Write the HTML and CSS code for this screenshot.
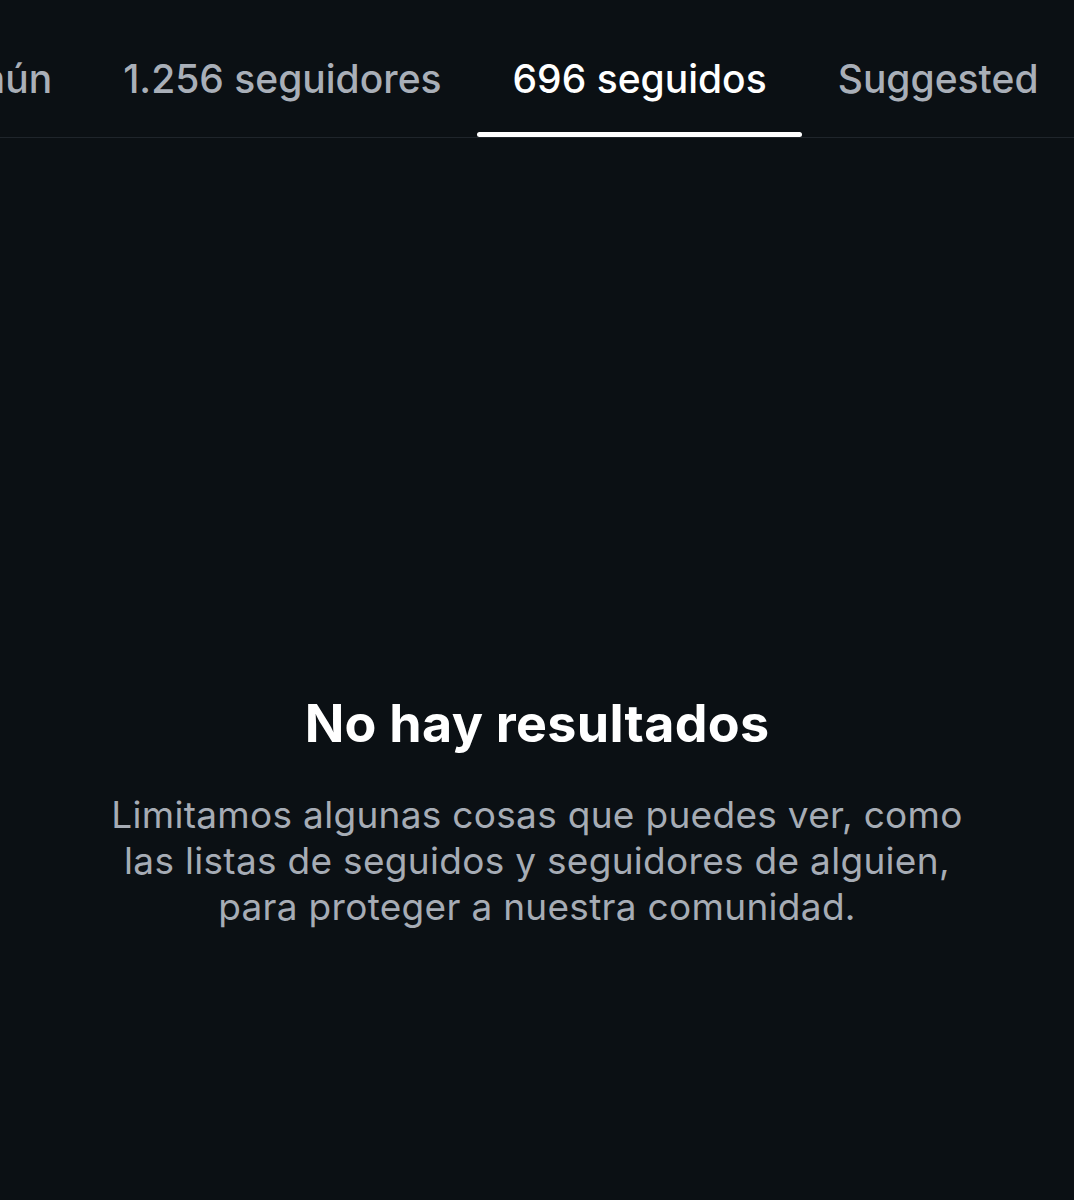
FILE: index.html
```html
<!DOCTYPE html>
<html lang="es">
  <head>
    <title>696 seguidos</title>
    <meta charset="UTF-8">
    <meta name="viewport" content="width=device-width, initial-scale=1.0">
    <link rel="stylesheet" href="styles.css">
  </head>
  <body>
    <nav class="tabs">
      <a class="tab">En común</a>
      <a class="tab">1.256 seguidores</a>
      <a class="tab active">696 seguidos</a>
      <a class="tab">Suggested</a>
    </nav>
    <main class="empty">
      <h1 class="empty-title">No hay resultados</h1>
      <p class="empty-text">Limitamos algunas cosas que puedes ver, como<br>
	las listas de seguidos y seguidores de alguien,<br>
	para proteger a nuestra comunidad.</p>
    </main>
  </body>
</html>
```

FILE: styles.css
```css
* { box-sizing:border-box; margin:0; padding:0; }
:root
{
    background-color:#0b1014;
}
body
{
    font-family:Inter, "Noto Sans", sans-serif;
    color:#e7e9ea;
    min-height:1200px;
    overflow:hidden;
}
.tabs
{
    display:flex;
    justify-content:flex-end;
    height:138px;
    border-bottom:1px solid #1f252b;
    overflow:hidden;
}
.tab
{
    flex:none;
    position:relative;
    display:flex;
    align-items:center;
    padding:19px 35.5px 0 35.5px;
    font-size:39px;
    font-weight:500;
    color:#a9afb8;
    white-space:nowrap;
}
.tab.active
{
    color:#ffffff;
}
.tab.active::after
{
    content:"";
    position:absolute;
    left:0; right:0; bottom:0;
    height:5px;
    border-radius:3px;
    background-color:#ffffff;
}
.empty
{
    padding-top:556px;
    text-align:center;
}
.empty-title
{
    font-size:52px;
    font-weight:700;
    line-height:60px;
    color:#ffffff;
    letter-spacing:0.3px;
}
.empty-text
{
    margin-top:38px;
    font-size:37px;
    line-height:46px;
    letter-spacing:0.3px;
    color:#a6acb5;
}
```
